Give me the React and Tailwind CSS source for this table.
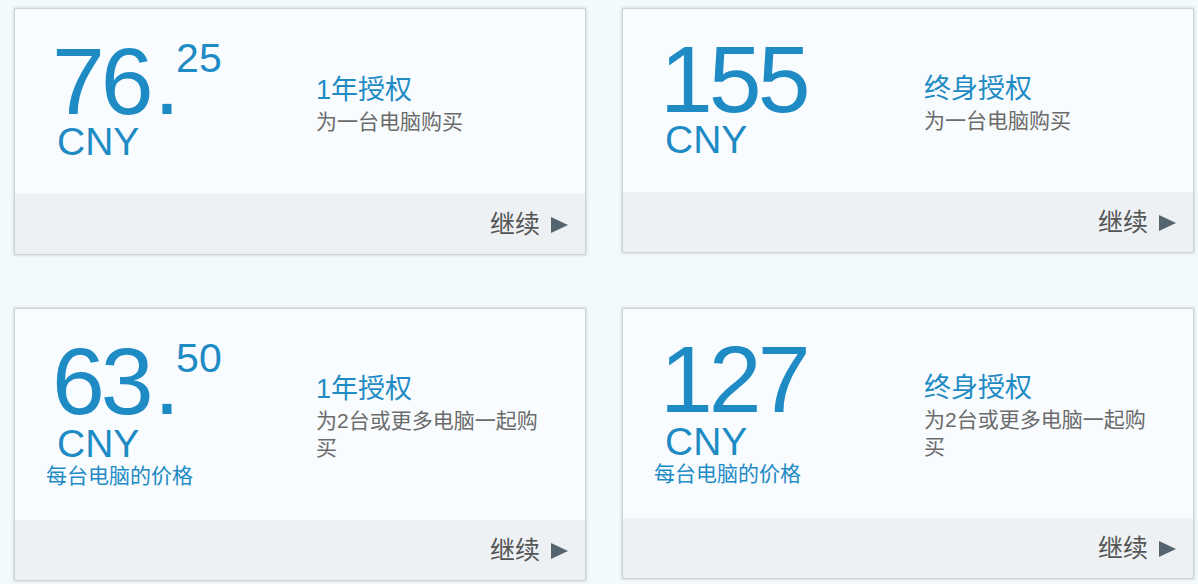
import React from "react";

const LATIN = { fontFamily: '"Liberation Sans", Arial, "Noto Sans CJK SC", sans-serif' };
const CJK = { fontFamily: '"Liberation Sans", "Noto Sans CJK SC", sans-serif' };

function Card({ int, dec, title, desc, perUnit }) {
  return (
    <div className="flex w-[572px] flex-col border border-[#cfd3d6] bg-[#f8fcff] shadow-[0_0_3px_rgba(0,0,0,0.22)]">
      <div className="flex">
        <div className={`w-[301px] shrink-0 pl-[31px] pb-[34px] ${dec ? "pt-[29px]" : "pt-[27px]"}`}>
          <div className="flex items-start text-[#1f8bc4]" style={LATIN}>
            <span className="ml-[6px] text-[95px] leading-[86px] tracking-[-4px]">{int}</span>
            {dec && <span className="ml-[4px] text-[95px] leading-[86px]">.</span>}
            {dec && (
              <span className="ml-[-4px] text-[41px] leading-[40px]">{dec}</span>
            )}
          </div>
          <div
            className={`ml-[11px] text-[39px] leading-[36px] text-[#1f8bc4] ${perUnit ? "mt-[2px]" : ""}`}
            style={LATIN}
          >
            CNY
          </div>
          {perUnit && (
            <div className="mt-[3px] text-[21px] leading-[21px] text-[#1f8bc4]" style={CJK}>
              每台电脑的价格
            </div>
          )}
        </div>
        <div className="flex w-[232px] items-center">
          <div style={CJK} className="mt-[3px]">
            <div className="text-[27px] leading-[36px] text-[#1f8bc4]">{title}</div>
            <div className="text-[21px] leading-[27px] text-[#6b6b6b]">{desc}</div>
          </div>
        </div>
      </div>
      <div className="flex h-[60px] items-center justify-end gap-[11px] bg-[#edf1f4] pr-[17px]">
        <span className="text-[25px] leading-[30px] text-[#555555]" style={CJK}>
          继续
        </span>
        <svg width="17" height="16" viewBox="0 0 17 16" className="mt-[1px]">
          <polygon points="0,0 17,8 0,16" fill="#55656f" />
        </svg>
      </div>
    </div>
  );
}

export default function App() {
  return (
    <div className="min-h-[584px] w-[1198px] bg-[#f3fafd] pl-[14px] pt-[8px]">
      <div className="grid grid-cols-[572px_572px] items-start gap-x-[36px] gap-y-[53px]">
        <Card int="76" dec="25" title="1年授权" desc="为一台电脑购买" />
        <Card int="155" title="终身授权" desc="为一台电脑购买" />
        <Card int="63" dec="50" title="1年授权" desc="为2台或更多电脑一起购买" perUnit />
        <Card int="127" title="终身授权" desc="为2台或更多电脑一起购买" perUnit />
      </div>
    </div>
  );
}
